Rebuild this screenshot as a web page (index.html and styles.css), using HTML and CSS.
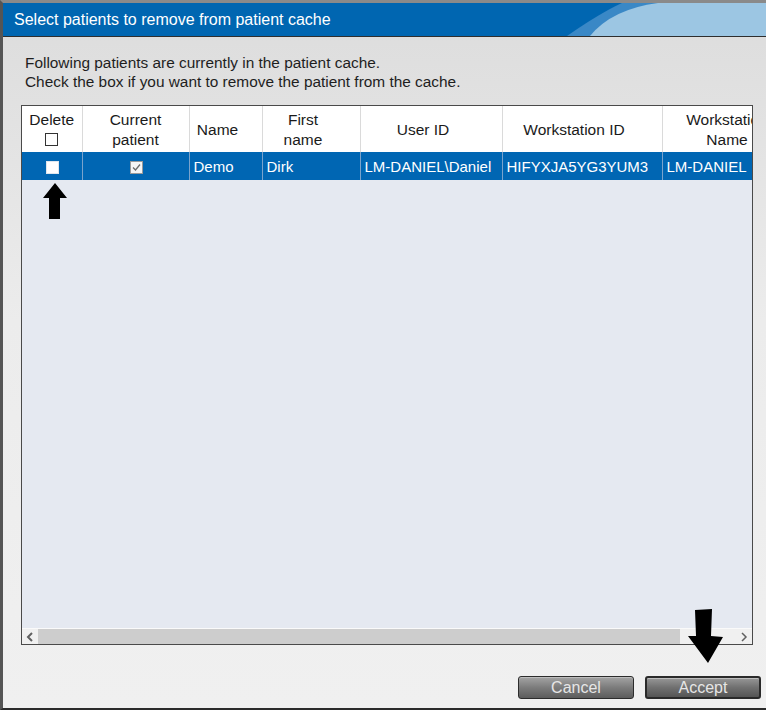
FILE: index.html
```html
<!DOCTYPE html>
<html>
<head>
    <meta charset="UTF-8">
    <title>Patient cache</title>
    <link rel="stylesheet" href="styles.css">
</head>
<body>
    <div class="window">
        <div class="titlebar">
            <svg class="swoosh" width="220" height="33" viewBox="0 0 220 33">
                <path d="M7 33 Q40 10 62 0 L220 0 L220 33 Z" fill="#3a88c6"/>
                <path d="M30 33 Q52 6 98 0 L220 0 L220 33 Z" fill="#9cc6e3"/>
            </svg>
            <span class="title">Select patients to remove from patient cache</span>
        </div>
        <div class="content">
            <p class="intro">Following patients are currently in the patient cache.<br>Check the box if you want to remove the patient from the cache.</p>
            <div class="grid">
                <div class="grid-view">
                    <table>
                        <colgroup>
                            <col style="width:60px">
                            <col style="width:107px">
                            <col style="width:73px">
                            <col style="width:98px">
                            <col style="width:142px">
                            <col style="width:160px">
                            <col style="width:146px">
                        </colgroup>
                        <tr>
                            <th>Delete<br><span class="chk"></span></th>
                            <th>Current<br>patient</th>
                            <th class="sort">Name</th>
                            <th class="sort">First<br>name</th>
                            <th class="sort">User ID</th>
                            <th class="sort">Workstation ID</th>
                            <th class="sort">Workstation<br>Name</th>
                        </tr>
                        <tr class="selected">
                            <td class="center"><span class="chk white"></span></td>
                            <td class="center"><span class="chk checked"><svg width="11" height="11" viewBox="0 0 11 11"><polyline points="2,5.5 4.5,8 9,2.5" fill="none" stroke="#6a6a6a" stroke-width="1.3"/></svg></span></td>
                            <td>Demo</td>
                            <td>Dirk</td>
                            <td>LM-DANIEL\Daniel</td>
                            <td>HIFYXJA5YG3YUM3</td>
                            <td>LM-DANIEL</td>
                        </tr>
                    </table>
                </div>
                <div class="hscroll">
                    <span class="sbtn"><svg width="8" height="10" viewBox="0 0 8 10"><polyline points="6,1 2,5 6,9" fill="none" stroke="#606060" stroke-width="2"/></svg></span>
                    <span class="thumb"></span>
                    <span class="track"></span>
                    <span class="sbtn"><svg width="8" height="10" viewBox="0 0 8 10"><polyline points="2,1 6,5 2,9" fill="none" stroke="#606060" stroke-width="1.5"/></svg></span>
                </div>
            </div>
            <div class="buttons">
                <button class="btn">Cancel</button>
                <button class="btn default">Accept</button>
            </div>
        </div>
        <!-- pointer arrows drawn over the dialog -->
        <svg class="arrow arrow-up" width="26" height="36" viewBox="0 0 26 36">
            <polygon points="13,0 25,15 18,15 18,36 7,36 7,15 1,15" fill="#000"/>
        </svg>
        <svg class="arrow arrow-down" width="38" height="56" viewBox="0 0 38 56">
            <polygon points="9,1 26,0 25,27 37,28 22,54 2,27 10,27" fill="#000"/>
        </svg>
    </div>
</body>
</html>
```

FILE: styles.css
```css
*{
    margin: 0;
    padding: 0;
    box-sizing: border-box;
}
body{
    width: 766px;
    height: 710px;
    overflow: hidden;
    background: #fff;
    font-family: "Liberation Sans", Arial, sans-serif;
    color: #1a1a1a;
}
.window{
    position: relative;
    width: 766px;
    height: 710px;
    border-left: 3px solid #555;
    border-top: 3px solid #8a8a8a;
    border-bottom: 2px solid #2b2b2b;
    display: flex;
    flex-direction: column;
    background: linear-gradient(#dcdcdc, #ececec 45%, #f0f0f0);
}
.titlebar{
    position: relative;
    height: 34px;
    flex-shrink: 0;
    background: #0066b1;
    border-bottom: 1px solid #2e2e2e;
    display: flex;
    align-items: center;
    padding-left: 11px;
}
.swoosh{
    position: absolute;
    left: 557px;
    top: 0;
}
.title{
    position: relative;
    color: #fff;
    font-size: 16px;
}
.content{
    flex: 1;
    display: flex;
    flex-direction: column;
    padding: 16px 5px 0 18px;
}
.intro{
    margin-left: 4px;
    font-size: 15.4px;
    line-height: 19px;
    color: #1e1e1e;
}
.grid{
    margin-top: 14px;
    width: 732px;
    height: 540px;
    border: 1px solid #4a4a4a;
    display: flex;
    flex-direction: column;
}
.grid-view{
    flex: 1;
    overflow: hidden;
    background: #e5e9f1;
}
table{
    border-collapse: collapse;
    table-layout: fixed;
    width: 786px;
}
th{
    height: 46px;
    padding-top: 2px;
    background: #fff;
    font-weight: normal;
    font-size: 15.5px;
    line-height: 20px;
    color: #1a1a1a;
    text-align: center;
    vertical-align: middle;
    border-right: 1px solid #dadada;
    white-space: nowrap;
}
th.sort{
    padding-right: 16px;
}
td{
    height: 28px;
    background: #0066b3;
    color: #fff;
    font-size: 15px;
    padding-left: 4px;
    border-right: 1px solid #7aa3cc;
    white-space: nowrap;
    overflow: hidden;
}
td.center{
    padding-left: 2px;
    text-align: center;
}
.chk{
    display: inline-block;
    width: 13px;
    height: 13px;
    border: 1px solid #333;
    background: #fff;
    vertical-align: middle;
    margin-top: -2px;
}
.chk.white{
    border-color: #dfe6ee;
    margin-top: 0;
}
.chk.checked{
    border-color: #9a9a9a;
    background: #f5f5f5;
    margin-top: 0;
}
.chk svg{
    display: block;
}
.hscroll{
    height: 16px;
    flex-shrink: 0;
    display: flex;
    background: #f0f0f0;
    border-top: 1px solid #fafafa;
}
.sbtn{
    width: 16px;
    display: flex;
    align-items: center;
    justify-content: center;
}
.thumb{
    width: 642px;
    background: #cdcdcd;
}
.track{
    flex: 1;
}
.buttons{
    margin-top: 31px;
    display: flex;
    justify-content: flex-end;
    gap: 11px;
}
.btn{
    width: 116px;
    height: 23px;
    font-family: "Liberation Sans", Arial, sans-serif;
    font-size: 16px;
    color: #e6e6e6;
    background: linear-gradient(#a4a4a4, #7c7c7c 50%, #5c5c5c);
    border: 1px solid #2c2c2c;
    border-radius: 3px;
    box-shadow: inset 0 1px 0 #bdbdbd;
}
.btn.default{
    border: 2px solid #2a2a2a;
    background: linear-gradient(#979797, #707070 50%, #555);
}
.arrow{
    position: absolute;
}
.arrow-up{
    left: 39px;
    top: 180px;
}
.arrow-down{
    left: 683px;
    top: 606px;
}
```
